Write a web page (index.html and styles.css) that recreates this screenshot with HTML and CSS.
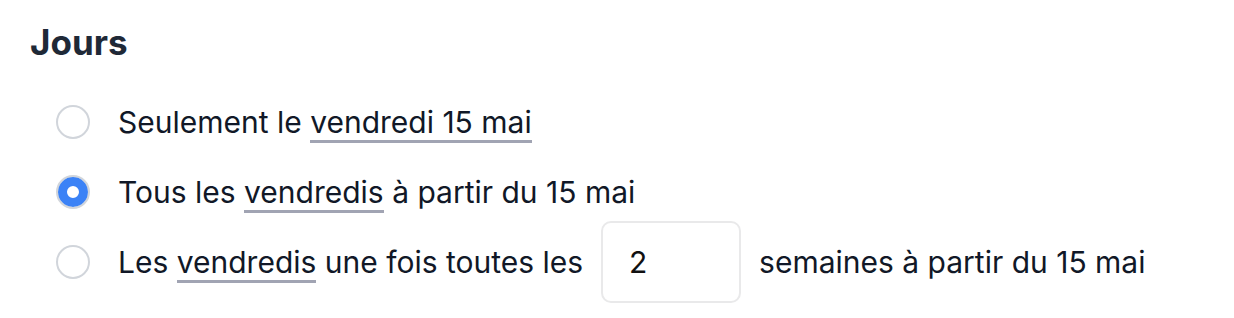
FILE: index.html
```html
<html>

<head>
  <meta charset="utf-8" />
  <meta name="viewport" content="width=device-width, initial-scale=1" />
  <title>Jours</title>
  <link rel="stylesheet" href="styles.css">
</head>

<body>
  <div class="days">
    <h2 class="title">Jours</h2>

    <div class="options">
      <label class="option">
        <input type="radio" name="repeat" value="once" />
        <span class="text">Seulement le <span class="pick">vendredi 15 mai</span></span>
      </label>

      <label class="option">
        <input type="radio" name="repeat" value="weekly" checked />
        <span class="text">Tous les <span class="pick">vendredis</span> à partir du 15 mai</span>
      </label>

      <label class="option">
        <input type="radio" name="repeat" value="every" />
        <span class="text">Les <span class="pick">vendredis</span> une fois toutes les</span>
        <input type="text" class="weeks" value="2" />
        <span class="text">semaines à partir du 15 mai</span>
      </label>
    </div>
  </div>
</body>

</html>
```

FILE: styles.css
```css
body {
  margin: 0;
  background: #fff;
  font-family: Inter, "Noto Sans", sans-serif;
  color: #111827;
}

.days {
  padding: 22px 30px;
}

.title {
  margin: 0;
  font-size: 35px;
  font-weight: 700;
  color: #1f2937;
  line-height: 40px;
}

.options {
  margin-top: 25px;
  padding-left: 26px;
}

.option {
  display: flex;
  align-items: center;
  height: 70px;
  font-size: 30px;
}

.option input[type="radio"] {
  appearance: none;
  margin: 0 28px 0 0;
  width: 34px;
  height: 34px;
  border: 2px solid #d1d5db;
  border-radius: 50%;
  background: #fff;
  flex: none;
}

.option input[type="radio"]:checked {
  background: #3b82f6;
  box-shadow: inset 0 0 0 9px #3b82f6, inset 0 0 0 20px #fff;
}

.pick {
  display: inline-block;
  border-bottom: 3px solid #a1a4b3;
  line-height: 34px;
  padding-bottom: 1px;
  margin-bottom: -4px;
}

.weeks {
  box-sizing: border-box;
  width: 140px;
  height: 82px;
  margin: -6px 18px -6px 18px;
  padding: 0 26px;
  border: 2px solid #e9e9ea;
  border-radius: 10px;
  font: 30px Inter, sans-serif;
  color: #111;
  outline: none;
}
```
